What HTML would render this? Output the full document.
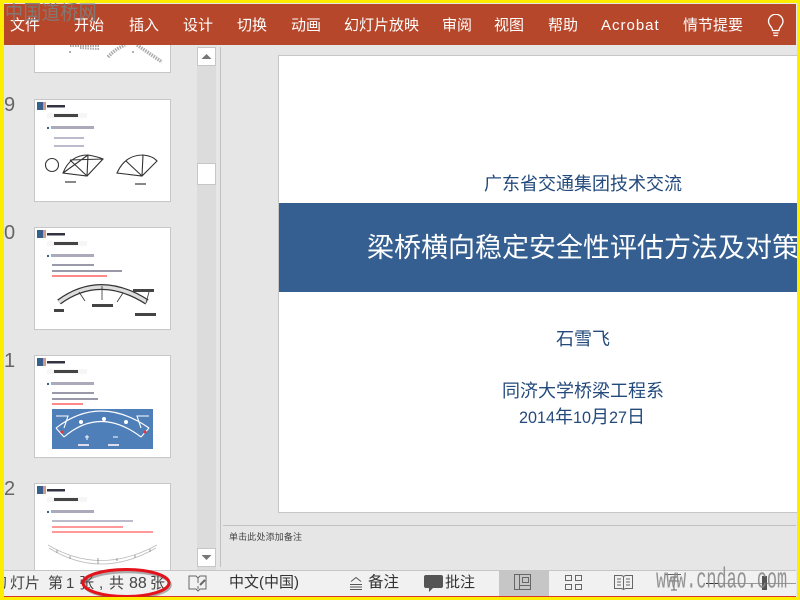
<!DOCTYPE html>
<html><head><meta charset="utf-8"><style>
html,body{margin:0;padding:0}
body{width:800px;height:600px;position:relative;overflow:hidden;background:#E6E6E6;font-family:"Liberation Sans","Noto Sans CJK SC",sans-serif}
.a{position:absolute;white-space:nowrap}
.t{position:absolute;top:14px;color:#fff;font-size:15px;line-height:24px;white-space:nowrap}
.thumb{position:absolute;left:34px;width:135px;background:#fff;border:1px solid #C6C6C6;overflow:hidden}
.thumb svg{filter:blur(.35px);display:block}
.n{position:absolute;left:4px;font-size:20px;line-height:22px;color:#666;font-family:"Liberation Sans",sans-serif}
.s{position:absolute;font-size:15px;line-height:20px;color:#333;white-space:nowrap}
.g{position:absolute;top:574px;font-size:15px;line-height:20px;color:#444;white-space:nowrap}
</style></head><body>

<!-- ribbon -->
<div class="a" style="left:4px;top:4px;width:792px;height:41px;background:#B7472A"></div>
<span class="t" style="left:10px">文件</span>
<span class="t" style="left:74px">开始</span>
<span class="t" style="left:129px">插入</span>
<span class="t" style="left:183px">设计</span>
<span class="t" style="left:237px">切换</span>
<span class="t" style="left:291px">动画</span>
<span class="t" style="left:344px">幻灯片放映</span>
<span class="t" style="left:442px">审阅</span>
<span class="t" style="left:494px">视图</span>
<span class="t" style="left:548px">帮助</span>
<span class="t" style="left:601px;letter-spacing:1px">Acrobat</span>
<span class="t" style="left:683px">情节提要</span>
<svg class="a" style="left:765px;top:14px" width="22" height="24" viewBox="0 0 22 24" fill="none" stroke="#fff" stroke-width="1.300"><path d="M7.500 16.500C7.500 13 3.500 11.500 3.500 7.500A7 7 0 0 1 18 7.500C18 11.500 14 13 14 16.500Z"/><path d="M8 19h5.500M8.500 21.500h4.500"/></svg>

<!-- slide thumbnails -->
<div class="thumb" style="top:45px;height:27px;border-top:0">
<svg width="135" height="27" fill="none" stroke="#aaa">
<path d="M35 1L65 1M45 3L65 4" stroke-width="2" stroke-dasharray="1.500 1"/>
<path d="M73 12Q80 4 90 0" stroke-width="3.500" stroke-dasharray="1.500 1"/>
<path d="M102 0L127 17" stroke-width="3.500" stroke-dasharray="1.500 1"/>
<circle cx="35" cy="7" r="1" fill="#999" stroke="none"/><circle cx="98" cy="7" r="1" fill="#999" stroke="none"/></svg>
</div>

<div class="n" style="top:94px">9</div>
<div class="thumb" style="top:99px;height:101px">
<svg width="135" height="101">
<rect x="2" y="2" width="6" height="8" fill="#36608F"/><rect x="8" y="2" width="3" height="8" fill="#D39A8A"/>
<rect x="12" y="5" width="18" height="2.500" fill="#334"/><rect x="12" y="13" width="40" height="5" fill="#f6f6f6"/><rect x="19" y="14" width="24" height="3" fill="#444"/>
<rect x="12" y="27" width="2" height="2" fill="#36608F"/><rect x="16" y="26" width="43" height="3" fill="#aab"/>
<rect x="19" y="37" width="30" height="2" fill="#bbc"/><rect x="19" y="45" width="30" height="2" fill="#bbc"/>
<g fill="none" stroke="#333" stroke-width="1.100"><circle cx="17" cy="65" r="6.500"/><path d="M28 73Q35 55 53 55Q64 57 68 59L52 76ZM28 73L53 55M35 60L52 76M53 55L52 76M35 60L68 59M28 73L52 76"/><path d="M82 73Q90 55 108 55Q118 56 122 61L107 76ZM82 73L107 76M91 61L107 76M108 55L107 76M122 61L107 76"/></g>
<rect x="30" y="81" width="11" height="2" fill="#888"/><rect x="100" y="83" width="11" height="2" fill="#888"/>
</svg></div>

<div class="n" style="top:222px">0</div>
<div class="thumb" style="top:227px;height:101px">
<svg width="135" height="101">
<rect x="2" y="2" width="6" height="8" fill="#36608F"/><rect x="8" y="2" width="3" height="8" fill="#D39A8A"/>
<rect x="12" y="5" width="18" height="2.500" fill="#334"/><rect x="12" y="13" width="40" height="5" fill="#f6f6f6"/><rect x="19" y="14" width="24" height="3" fill="#444"/>
<rect x="12" y="27" width="2" height="2" fill="#36608F"/><rect x="16" y="26" width="43" height="3" fill="#aab"/>
<rect x="17" y="36" width="42" height="2" fill="#99a"/><rect x="17" y="42" width="70" height="2" fill="#99a"/><rect x="17" y="47" width="55" height="2" fill="#f88"/>
<path d="M24 74Q65 44 112 74" fill="none" stroke="#333" stroke-width="6"/><path d="M24 74Q65 44 112 74" fill="none" stroke="#ddd" stroke-width="3.500"/>
<rect x="19" y="81" width="10" height="3" fill="#444"/><rect x="57" y="76" width="21" height="3" fill="#444"/><rect x="98" y="61" width="21" height="3" fill="#444"/><rect x="100" y="85" width="21" height="3" fill="#444"/>
<path d="M44 64l6 9M67 58v14M88 65l-6 9M114 64l-3 11" stroke="#333" stroke-width=".8"/>
</svg></div>

<div class="n" style="top:350px">1</div>
<div class="thumb" style="top:355px;height:101px">
<svg width="135" height="101">
<rect x="2" y="2" width="6" height="8" fill="#36608F"/><rect x="8" y="2" width="3" height="8" fill="#D39A8A"/>
<rect x="12" y="5" width="18" height="2.500" fill="#334"/><rect x="12" y="13" width="40" height="5" fill="#f6f6f6"/><rect x="19" y="14" width="24" height="3" fill="#444"/>
<rect x="12" y="27" width="2" height="2" fill="#36608F"/><rect x="16" y="26" width="43" height="3" fill="#aab"/>
<rect x="17" y="36" width="42" height="2" fill="#99a"/><rect x="17" y="42" width="46" height="2" fill="#99a"/><rect x="17" y="47" width="31" height="2" fill="#f88"/>
<rect x="17" y="53" width="101" height="40" fill="#4F7FB9"/>
<g fill="none" stroke="#fff" stroke-width="1.100"><path d="M21 72Q65 38 114 72"/><path d="M29 81Q65 50 106 81"/><path d="M21 72l8 9M114 72l-8 9"/><path d="M21 60h12l-4 12M114 60h-12l4 12"/></g>
<circle cx="46" cy="66" r="2" fill="#fff"/><circle cx="69" cy="63" r="2" fill="#fff"/><circle cx="91" cy="66" r="2" fill="#fff"/><path d="M50 81h4M52 79v5M78 81h5" stroke="#fff"/>
<rect x="43" y="88" width="11" height="2" fill="#dde"/><rect x="73" y="88" width="11" height="2" fill="#dde"/>
<circle cx="27" cy="76" r="1.500" fill="#e33"/><circle cx="110" cy="76" r="1.500" fill="#e33"/>
</svg></div>

<div class="n" style="top:478px">2</div>
<div class="thumb" style="top:483px;height:101px">
<svg width="135" height="101">
<rect x="2" y="2" width="6" height="8" fill="#36608F"/><rect x="8" y="2" width="3" height="8" fill="#D39A8A"/>
<rect x="12" y="5" width="18" height="2.500" fill="#334"/><rect x="12" y="13" width="40" height="5" fill="#f6f6f6"/><rect x="19" y="14" width="24" height="3" fill="#444"/>
<rect x="12" y="27" width="2" height="2" fill="#36608F"/><rect x="16" y="26" width="43" height="3" fill="#aab"/>
<rect x="17" y="36" width="81" height="2" fill="#bbc"/><rect x="17" y="42" width="71" height="2" fill="#f99"/><rect x="17" y="47" width="101" height="2" fill="#f99"/>
<path d="M13 61Q65 92 122 61M14 64Q65 96 121 64" fill="none" stroke="#bbb" stroke-width=".8"/>
<path d="M22 66v3M35 72v3M63 74v6M82 74v3M100 71v3M115 65v3" stroke="#888" stroke-width=".8"/>
</svg></div>

<!-- scrollbar -->
<div class="a" style="left:197px;top:47px;width:19px;height:523px;background:#DCDCDC"></div>
<div class="a" style="left:197px;top:47px;width:19px;height:19px;background:#fff;border:1px solid #C6C6C6;box-sizing:border-box"></div>
<svg class="a" style="left:197px;top:47px" width="19" height="19"><path d="M4.500 12L9.500 7L14.500 12Z" fill="#777"/></svg>
<div class="a" style="left:197px;top:163px;width:19px;height:22px;background:#fff;border:1px solid #C6C6C6;box-sizing:border-box"></div>
<div class="a" style="left:197px;top:548px;width:19px;height:19px;background:#fff;border:1px solid #C6C6C6;box-sizing:border-box"></div>
<svg class="a" style="left:197px;top:548px" width="19" height="19"><path d="M4.500 7L9.500 12L14.500 7Z" fill="#777"/></svg>
<div class="a" style="left:220px;top:47px;width:1px;height:520px;background:#C0C0C0"></div>

<!-- main slide -->
<div class="a" style="left:278px;top:55px;width:519px;height:458px;background:#fff;border:1px solid #C6C6C6;border-right:0;box-sizing:border-box"></div>
<div class="a" style="left:279px;top:203px;width:518px;height:89px;background:#365F91"></div>
<div class="a" style="left:484px;top:172px;font-size:18px;line-height:24px;color:#244A7C">广东省交通集团技术交流</div>
<div class="a" style="left:367px;top:231px;width:430px;overflow:hidden;font-size:27px;line-height:34px;color:#fff">梁桥横向稳定安全性评估方法及对策</div>
<div class="a" style="left:556px;top:327px;font-size:18px;line-height:24px;color:#244A7C">石雪飞</div>
<div class="a" style="left:502px;top:379px;font-size:18px;line-height:24px;color:#244A7C">同济大学桥梁工程系</div>
<div class="a" style="left:519px;top:405px;font-size:18px;line-height:24px;color:#244A7C"><span style="font-size:16.200px">2014</span>年<span style="font-size:16.200px">10</span>月<span style="font-size:16.200px">27</span>日</div>

<!-- notes -->
<div class="a" style="left:223px;top:525px;width:573px;height:1px;background:#C0C0C0"></div>
<div class="a" style="left:229px;top:530px;font-size:9px;line-height:14px;color:#444;letter-spacing:.15px">单击此处添加备注</div>

<!-- status bar -->
<div class="a" style="left:4px;top:570px;width:792px;height:26px;background:#F1F1F1;border-top:1px solid #C6C6C6;box-sizing:border-box"></div>
<div class="a" style="left:4px;top:596px;width:792px;height:1px;background:#D63A2A"></div>
<div class="a" style="left:4px;top:573px;width:4px;height:20px;overflow:hidden"><span class="g" style="left:-12px;top:1px">幻</span></div>
<span class="g" style="left:10px">灯片</span>
<span class="g" style="left:48px">第</span>
<span class="g" style="left:66px">1</span>
<span class="g" style="left:79px">张</span>
<span class="g" style="left:99px">,</span>
<span class="g" style="left:109px">共</span>
<span class="g" style="left:129px;font-size:16px">88</span>
<span class="g" style="left:150px">张</span>
<svg class="a" style="left:78px;top:566px" width="98" height="34" viewBox="0 0 98 34"><ellipse cx="49.500" cy="19" rx="43" ry="13" fill="none" stroke="#555" stroke-width="2.500" opacity=".45"/><ellipse cx="48" cy="17" rx="43" ry="13.500" fill="none" stroke="#E3121B" stroke-width="3"/></svg>
<svg class="a" style="left:188px;top:573px" width="20" height="20" fill="none" stroke="#666" stroke-width="1"><path d="M1 3h7l2 2 2-2h6v13h-6l-2 2-2-2H1zM10 5v5M10 13v3"/><path d="M12 12l5-5" stroke-width="2"/></svg>
<div class="s" style="left:229px;top:573px;font-size:15px">中文(中国)</div>
<svg class="a" style="left:349px;top:576px" width="14" height="14" stroke="#555" fill="none"><path d="M2 5.500L7 1.500L12 5.500M1 8.500h12M1 11h12M1 13.500h12"/></svg>
<div class="s" style="left:368px;top:573px;font-size:15.500px">备注</div>
<svg class="a" style="left:424px;top:575px" width="19" height="17"><path d="M2 0h15a2 2 0 0 1 2 2v9a2 2 0 0 1-2 2H9l-4 4v-4H2a2 2 0 0 1-2-2V2a2 2 0 0 1 2-2z" fill="#555"/></svg>
<div class="s" style="left:445px;top:573px">批注</div>
<div class="a" style="left:499px;top:570px;width:50px;height:26px;background:#C6C6C6"></div>
<svg class="a" style="left:514px;top:574px" width="20" height="18" fill="none" stroke="#666"><path d="M.500.500h16v15h-16zM5.500.500v15M8.500 3.500h6v5h-6zM5.500 11.500h11"/></svg>
<svg class="a" style="left:564px;top:574px" width="20" height="18" fill="none" stroke="#666"><path d="M1.500 1.500h6v5h-6zM11.500 1.500h6v5h-6zM1.500 10.500h6v5h-6zM11.500 10.500h6v5h-6z"/></svg>
<svg class="a" style="left:614px;top:574px" width="20" height="18" fill="none" stroke="#666"><path d="M.500 1.500h7l2 1 2-1h7v13h-7l-2 1-2-1h-7zM9.500 2.500v13M3 5h4M3 8h4M3 11h4M12 5h4M12 8h4M12 11h4"/></svg>
<svg class="a" style="left:664px;top:574px" width="20" height="18" fill="none" stroke="#666"><path d="M1 .500h16M10 3v13M7 3h6M7 16h6M5 7h10"/></svg>
<div class="a" style="left:706px;top:583px;width:12px;height:1px;background:#333"></div>
<div class="a" style="left:718px;top:583px;width:78px;height:1px;background:#999"></div>
<div class="a" style="left:762px;top:576px;width:5px;height:14px;background:#555"></div>

<!-- watermarks -->
<div class="a" style="left:5px;top:1px;font-size:18px;line-height:20px;letter-spacing:.4px;color:#7E7E7E;opacity:.9;transform:scaleY(1.150);transform-origin:left top;font-family:'Liberation Sans','Noto Sans CJK SC',sans-serif">中国道桥网</div>
<div class="a" style="left:656px;top:567px;font-size:24px;line-height:24px;color:#888;opacity:.9;transform:scale(.7,1.200);transform-origin:left top;font-family:'Liberation Mono',monospace">www.cndao.com</div>

<!-- yellow frame -->
<div class="a" style="left:0;top:0;width:800px;height:3px;background:#FFED00"></div>
<div class="a" style="left:0;top:597px;width:800px;height:3px;background:#FFED00"></div>
<div class="a" style="left:0;top:0;width:3.500px;height:600px;background:#FFED00"></div>
<div class="a" style="left:797px;top:0;width:3px;height:600px;background:#FFED00"></div>
</body></html>
